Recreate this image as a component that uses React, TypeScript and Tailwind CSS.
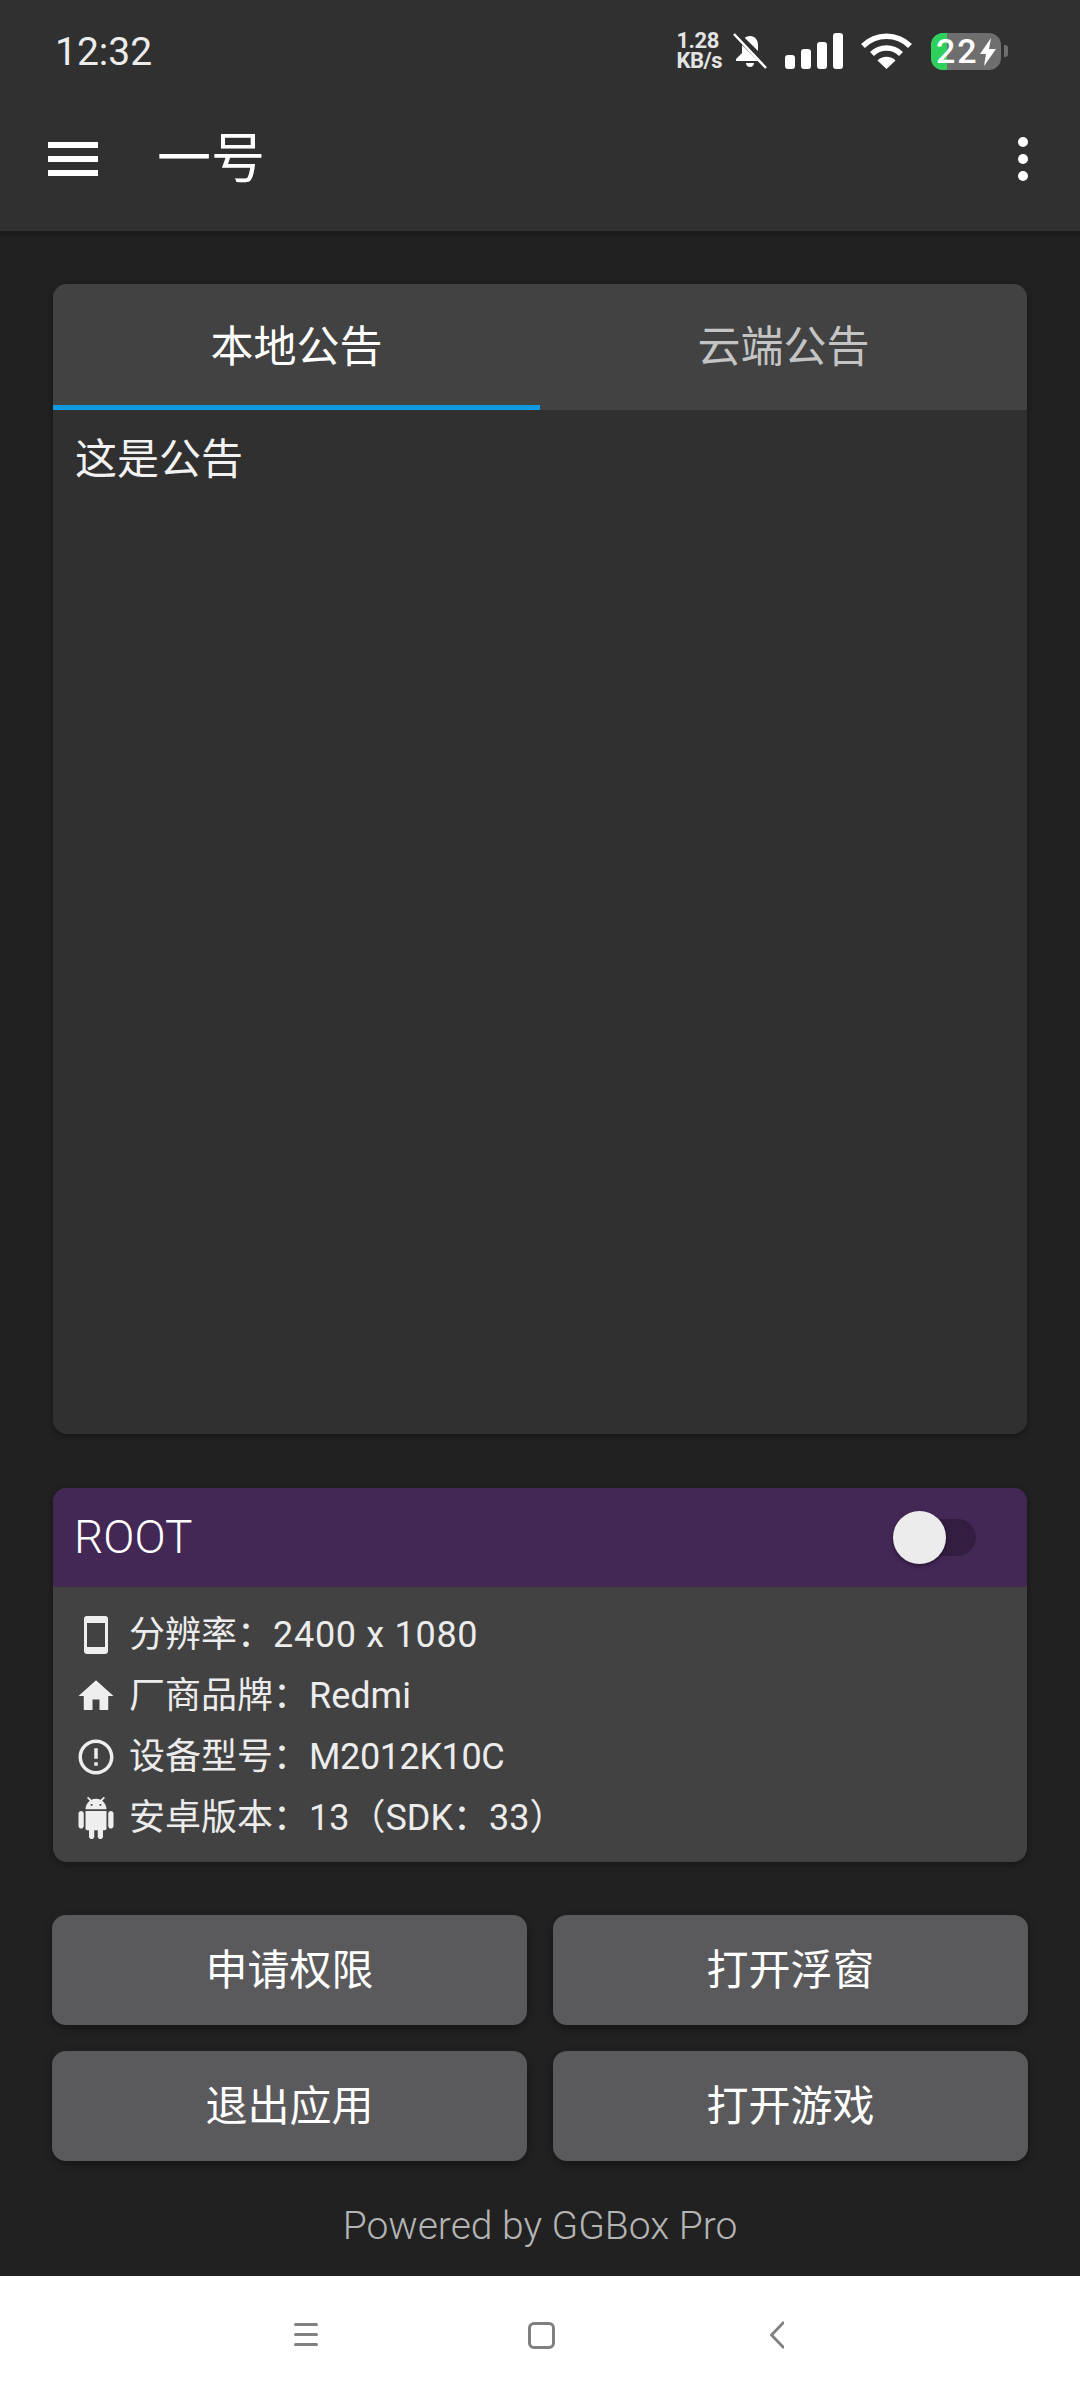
const fontStack = "font-['Roboto','Noto_Sans_CJK_SC',sans-serif]"

function StatusBar() {
  return (
    <div className="flex h-[102px] items-center justify-between pl-[55px] pr-[72px]">
      <span className="pt-[2px] text-[39px] leading-none text-[#ececec]">12:32</span>
      <div className="flex items-center">
        <div className="flex flex-col text-[22px] leading-[20px] font-bold tracking-[-0.5px] text-[#e4e4e4]">
          <span>1.28</span>
          <span>KB/s</span>
        </div>
        <svg viewBox="0 0 34 36" className="ml-[11px] h-[36px] w-[34px]" fill="#fff">
          <path d="M17 3c-5 0-8 4-8 9v8l-6 6v2h28v-2l-6-6v-8c0-5-3-9-8-9z" />
          <path d="M13 30h8c0 2.500-1.800 4-4 4s-4-1.500-4-4z" />
          <path d="M0 0 L34 34" stroke="#303030" strokeWidth="7" transform="translate(1 -1)" />
          <path d="M1 1 L33 35" stroke="#fff" strokeWidth="2.500" />
        </svg>
        <svg viewBox="0 0 58 36" className="ml-[18px] h-[36px] w-[58px]" fill="#fff">
          <rect x="0" y="22" width="10" height="14" rx="3" />
          <rect x="16" y="16" width="10" height="20" rx="3" />
          <rect x="32" y="9" width="10" height="27" rx="3" />
          <rect x="48" y="0" width="10" height="36" rx="3" />
        </svg>
        <svg viewBox="0 0 51 36" className="ml-[18px] h-[36px] w-[51px]" fill="none" stroke="#fff" strokeWidth="5.500">
          <path d="M2 13C15 0 36 0 49 13" />
          <path d="M11 21C19 13 32 13 40 21" />
          <path d="M25.500 36L16.500 27.500C21 22.500 30 22.500 34.500 27.500Z" fill="#fff" stroke="none" />
        </svg>
        <div className="relative ml-[19px] flex h-[37px] w-[70px] items-center rounded-[12px] bg-[#6e6e6e]">
          <div className="h-full w-[16px] rounded-l-[12px] bg-[#2fd15c]" />
          <span className="absolute left-[5px] top-0 text-[34px] leading-[37px] font-medium tracking-[2px] text-white">22</span>
          <svg viewBox="0 0 16 28" className="absolute left-[49px] top-[5px] h-[28px] w-[16px]" fill="#fff">
            <path d="M11 0L0 16h6l-2 12L16 11H9z" />
          </svg>
        </div>
        <div className="ml-[3px] h-[12px] w-[4px] rounded-r-[3px] bg-[#6e6e6e]" />
      </div>
    </div>
  )
}

function Toolbar() {
  return (
    <div className="flex h-[129px] items-start justify-between pl-[48px] pr-[52px] pt-[38px]">
      <div className="flex items-center">
        <div className="flex h-[34px] w-[50px] flex-col justify-between">
          <div className="h-[6px] bg-white" />
          <div className="h-[6px] bg-white" />
          <div className="h-[6px] bg-white" />
        </div>
        <span className="ml-[59px] pt-[3px] text-[54px] leading-[34px] text-white">一号</span>
      </div>
      <div className="-mt-[3px] flex h-[44px] flex-col justify-between">
        <div className="size-[10px] rounded-full bg-white" />
        <div className="size-[10px] rounded-full bg-white" />
        <div className="size-[10px] rounded-full bg-white" />
      </div>
    </div>
  )
}

function NoticeCard() {
  return (
    <div className="mx-[53px] mt-[53px] flex h-[1150px] flex-col overflow-hidden rounded-[14px] bg-[#303030] shadow-[0_2px_6px_rgba(0,0,0,0.35)]">
      <div className="flex h-[126px] bg-[#424242]">
        <div className="flex flex-1 items-center justify-center border-b-[5px] border-[#0f9be0] pt-[6px] text-[43px] text-white">
          本地公告
        </div>
        <div className="flex flex-1 items-center justify-center pb-[5px] pt-[6px] text-[43px] text-[#c4c4c4]">
          云端公告
        </div>
      </div>
      <p className="px-[22px] pt-[20px] text-[42px] leading-[60px] text-[#f2f2f2]">这是公告</p>
    </div>
  )
}

const PhoneIcon = () => (
  <svg viewBox="0 0 24 38" className="h-[38px] w-[24px]">
    <path fillRule="evenodd" fill="#eeeeee" d="M3 0h18a3 3 0 0 1 3 3v32a3 3 0 0 1-3 3H3a3 3 0 0 1-3-3V3a3 3 0 0 1 3-3zM3 7v24h18V7z" />
  </svg>
)

const HomeIcon = () => (
  <svg viewBox="0 0 24 24" className="size-[42px]" fill="#eeeeee">
    <path d="M10 20v-6h4v6h5v-8h3L12 3 2 12h3v8z" />
  </svg>
)

const InfoIcon = () => (
  <svg viewBox="0 0 24 24" className="size-[42px]" fill="#eeeeee">
    <path d="M11 15h2v2h-2zm0-8h2v6h-2zm.99-5C6.470 2 2 6.480 2 12s4.470 10 9.990 10C17.520 22 22 17.520 22 12S17.520 2 11.990 2zM12 20c-4.420 0-8-3.580-8-8s3.580-8 8-8 8 3.580 8 8-3.580 8-8 8z" />
  </svg>
)

const AndroidIcon = () => (
  <svg viewBox="0 0 24 24" className="size-[42px]" fill="#eeeeee">
    <path d="M6 18c0 .55.45 1 1 1h1v3.500c0 .83.67 1.500 1.500 1.500s1.500-.67 1.500-1.500V19h2v3.500c0 .83.67 1.500 1.500 1.500s1.500-.67 1.500-1.500V19h1c.55 0 1-.45 1-1V8H6v10zM3.500 8C2.670 8 2 8.670 2 9.500v7c0 .83.67 1.500 1.500 1.500S5 17.330 5 16.500v-7C5 8.670 4.330 8 3.500 8zm17 0c-.83 0-1.500.67-1.500 1.500v7c0 .83.67 1.500 1.500 1.500s1.500-.67 1.500-1.500v-7c0-.83-.67-1.500-1.500-1.500zm-4.970-5.840l1.300-1.300c.2-.2.2-.51 0-.71-.2-.2-.51-.2-.71 0l-1.480 1.480C13.850 1.230 12.950 1 12 1c-.96 0-1.860.23-2.660.63L7.850.15c-.2-.2-.51-.2-.71 0-.2.2-.2.51 0 .71l1.310 1.310C6.970 3.260 6 5.010 6 7h12c0-1.990-.97-3.750-2.470-4.840zM10 5H9V4h1v1zm5 0h-1V4h1v1z" />
  </svg>
)

function InfoRow({ icon, children }: { icon: React.ReactNode; children: React.ReactNode }) {
  return (
    <div className="flex h-[61px] items-center">
      <div className="flex w-[42px] justify-center">{icon}</div>
      <span className="ml-[12px] text-[36px] text-[#ececec]">{children}</span>
    </div>
  )
}

function RootCard() {
  return (
    <div className="mx-[53px] mt-[54px] overflow-hidden rounded-[14px] bg-[#424242] shadow-[0_2px_6px_rgba(0,0,0,0.35)]">
      <div className="flex h-[99px] items-center justify-between bg-[#432856] pl-[21px] pr-[51px]">
        <span className="text-[46px] font-light text-white">ROOT</span>
        <div className="relative h-[37px] w-[80px] rounded-full bg-[#331e42]">
          <div className="absolute -left-[3px] -top-[8px] size-[53px] rounded-full bg-[#ececec] shadow-[0_2px_4px_rgba(0,0,0,0.4)]" />
        </div>
      </div>
      <div className="pb-[14px] pl-[22px] pt-[17px]">
        <InfoRow icon={<PhoneIcon />}>分辨率：<span className="tracking-[0.7px]">2400 x 1080</span></InfoRow>
        <InfoRow icon={<HomeIcon />}>厂商品牌：Redmi</InfoRow>
        <InfoRow icon={<InfoIcon />}>设备型号：<span className="tracking-[-0.4px]">M2012K10C</span></InfoRow>
        <InfoRow icon={<AndroidIcon />}>安卓版本：13（SDK：33）</InfoRow>
      </div>
    </div>
  )
}

function ActionButton({ label }: { label: string }) {
  return (
    <button className="flex h-[110px] items-center justify-center rounded-[14px] bg-[#5a5a5c] text-[42px] text-white shadow-[0_3px_8px_rgba(0,0,0,0.35)]">
      {label}
    </button>
  )
}

function NavBar() {
  return (
    <div className="flex h-[124px] items-center bg-white pb-[6px] pl-[294px]">
      <svg viewBox="0 0 24 24" className="h-[24px] w-[24px]" fill="#808080">
        <rect y="0" width="24" height="3" rx="1.500" />
        <rect y="10" width="24" height="3" rx="1.500" />
        <rect y="20" width="24" height="3" rx="1.500" />
      </svg>
      <div className="ml-[210px] h-[27px] w-[27px] rounded-[6px] border-[3px] border-[#808080]" />
      <svg viewBox="0 0 14 28" className="ml-[215px] h-[28px] w-[14px]" fill="none" stroke="#808080" strokeWidth="2.800">
        <path d="M14 1L1.500 14L14 27" />
      </svg>
    </div>
  )
}

export default function App() {
  return (
    <div className={`flex h-[2400px] w-[1080px] flex-col bg-[#212121] ${fontStack}`}>
      <div className="bg-[#303030] shadow-[0_2px_5px_rgba(0,0,0,0.25)]">
        <StatusBar />
        <Toolbar />
      </div>
      <NoticeCard />
      <RootCard />
      <div className="mx-[52px] mt-[53px] grid grid-cols-2 gap-x-[26px] gap-y-[26px]">
        <ActionButton label="申请权限" />
        <ActionButton label="打开浮窗" />
        <ActionButton label="退出应用" />
        <ActionButton label="打开游戏" />
      </div>
      <div className="flex flex-1 items-center justify-center pt-[16px] text-[39px] font-light text-[#b4b4b4]">
        Powered by GGBox Pro
      </div>
      <NavBar />
    </div>
  )
}
